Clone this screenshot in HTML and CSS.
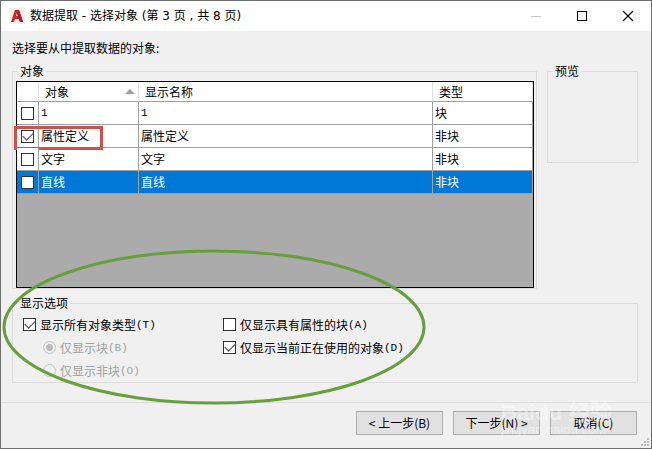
FILE: index.html
```
<!DOCTYPE html>
<html lang="zh-CN">

    <head>
        <meta charset="utf-8">
        <title>数据提取 - 选择对象</title>
        <meta name="viewport" content="width=device-width, initial-scale=1.0">
        <link rel="stylesheet" href="styles.css">
    </head>

    <body>
        <header class="titlebar">
            <svg class="logo" viewBox="0 0 16 16" width="16" height="16">
                <rect width="16" height="16" fill="#f9ecea" />
                <path d="M2 14 L6 2 H10 L14 14 H11 L10 11 H6 L5 14 Z M7 8 H9 L8 5 Z" fill="#c5282f"
                    fill-rule="evenodd" />
                <path d="M9 2 H10 L14 14 H11 L10 11 L9 8 L8 5 Z" fill="#a51f27" />
            </svg>
            <h1>数据提取 - 选择对象 (第 3 页 , 共 8 页)</h1>
            <div class="window-buttons">
                <button type="button" aria-label="最小化" disabled>
                    <svg viewBox="0 0 12 12" width="12" height="12"><path d="M1 6.500 H11" stroke="#c8c8c8" /></svg>
                </button>
                <button type="button" aria-label="最大化">
                    <svg viewBox="0 0 12 12" width="12" height="12"><rect x="1.500" y="1.500" width="9" height="9" fill="none" stroke="#000" /></svg>
                </button>
                <button type="button" aria-label="关闭">
                    <svg viewBox="0 0 12 12" width="12" height="12"><path d="M1 1 L11 11 M11 1 L1 11" stroke="#000" stroke-width="1.200" /></svg>
                </button>
            </div>
        </header>

        <main>
            <p class="intro">选择要从中提取数据的对象:</p>
            <div class="columns">
                <fieldset class="objects">
                    <legend>对象</legend>
                    <div class="grid">
                        <table>
                            <colgroup>
                                <col class="col-check">
                                <col class="col-object">
                                <col class="col-name">
                                <col class="col-type">
                            </colgroup>
                            <thead>
                                <tr>
                                    <th></th>
                                    <th><div class="sorted">对象 <svg viewBox="0 0 10 5" width="10" height="5"><path d="M0 5 L5 0 L10 5 Z" fill="#a0a0a0" /></svg></div></th>
                                    <th>显示名称</th>
                                    <th>类型</th>
                                </tr>
                            </thead>
                            <tbody>
                                <tr>
                                    <td><input type="checkbox" aria-label="1"></td>
                                    <td class="mono">1</td>
                                    <td class="mono">1</td>
                                    <td>块</td>
                                </tr>
                                <tr>
                                    <td><input type="checkbox" aria-label="属性定义" checked><span class="red-mark"></span></td>
                                    <td>属性定义</td>
                                    <td>属性定义</td>
                                    <td>非块</td>
                                </tr>
                                <tr>
                                    <td><input type="checkbox" aria-label="文字"></td>
                                    <td>文字</td>
                                    <td>文字</td>
                                    <td>非块</td>
                                </tr>
                                <tr class="selected">
                                    <td><input type="checkbox" aria-label="直线"></td>
                                    <td>直线</td>
                                    <td>直线</td>
                                    <td>非块</td>
                                </tr>
                            </tbody>
                        </table>
                    </div>
                </fieldset>

                <fieldset class="preview">
                    <legend>预览</legend>
                </fieldset>
            </div>

            <fieldset class="options">
                <legend>显示选项</legend>
                <div class="option-columns">
                    <div>
                        <label><input type="checkbox" checked>显示所有对象类型<span class="mono">(T)</span></label>
                        <label class="sub"><input type="radio" name="kind" checked disabled>仅显示块<span class="mono">(B)</span></label>
                        <label class="sub"><input type="radio" name="kind" disabled>仅显示非块<span class="mono">(O)</span></label>
                    </div>
                    <div>
                        <label><input type="checkbox">仅显示具有属性的块<span class="mono">(A)</span></label>
                        <label><input type="checkbox" checked>仅显示当前正在使用的对象<span class="mono">(D)</span></label>
                    </div>
                </div>
                <svg class="green-mark" viewBox="0 0 424 156" width="424" height="156">
                    <ellipse cx="212" cy="78" rx="210" ry="76" fill="none" stroke="#669f3c" stroke-width="3" />
                </svg>
            </fieldset>
        </main>

        <footer>
            <button type="button">&lt; 上一步(B)</button>
            <button type="button">下一步(N) &gt;</button>
            <button type="button">取消(C)</button>
            <div class="watermark">
                <span class="brand">Baidu 经验</span>
                <span>jingyan.baidu.com</span>
            </div>
            <svg class="grip" viewBox="0 0 8 8" width="8" height="8">
                <path d="M6 0h2v2h-2z M3 3h2v2h-2z M6 3h2v2h-2z M0 6h2v2h-2z M3 6h2v2h-2z M6 6h2v2h-2z" fill="#bdbdbd" />
            </svg>
        </footer>
    </body>

</html>
```

FILE: styles.css
```
* {
    box-sizing: border-box;
}

body {
    margin: 0;
    min-height: 100vh;
    display: flex;
    flex-direction: column;
    border: 1px solid #6e7070;
    background: #f0f0f0;
    color: #000;
    font: 12px/16px "Noto Sans CJK SC", sans-serif;
}

button,
input {
    font: inherit;
    margin: 0;
}

/* title bar */

.titlebar {
    display: flex;
    align-items: center;
    height: 30px;
    padding-left: 8px;
    background: #fff;
}

.titlebar h1 {
    flex: 1;
    margin: 0 0 0 5px;
    font-family: "DejaVu Sans", "Noto Sans CJK SC", sans-serif;
    font-size: 12px;
    font-weight: normal;
}

.window-buttons {
    display: flex;
}

.window-buttons button {
    display: flex;
    align-items: center;
    justify-content: center;
    width: 46px;
    height: 28px;
    padding: 0;
    border: 0;
    background: none;
}

/* content */

main {
    flex: 1;
    padding: 9px 13px 0 11px;
}

.intro {
    margin: 0 0 7px;
}

.columns {
    display: flex;
    align-items: flex-start;
    gap: 10px;
}

fieldset {
    min-width: 0;
    margin: 0;
    padding: 0;
    border: 1px solid #dcdcdc;
}

legend {
    margin-left: 5px;
    padding: 0 2px;
}

.objects {
    flex: 1;
}

.preview {
    width: 91px;
    height: 100px;
}

.grid {
    height: 207px;
    margin: 2px 2px 0 3px;
    border: 1px solid #000;
    background: #ababab;
}

table {
    width: 100%;
    table-layout: fixed;
    border-collapse: separate;
    border-spacing: 0;
}

.col-check {
    width: 22px;
}

.col-object {
    width: 100px;
}

.col-type {
    width: 100px;
}

th,
td {
    height: 23px;
    padding: 0 0 0 2px;
    border-right: 1px solid #a0a0a0;
    border-bottom: 1px solid #a0a0a0;
    background: #fff;
    text-align: left;
    font-weight: normal;
    line-height: 16px;
}

th {
    height: 20px;
    padding-left: 6px;
    border-right-color: #e0e0e0;
}

td:first-child {
    position: relative;
    padding-left: 4px;
}

.sorted {
    display: flex;
    align-items: center;
    justify-content: space-between;
    padding-right: 3px;
}

.selected td {
    background: #0078d7;
    color: #fff;
}

.mono {
    font-family: "Liberation Mono", monospace;
    font-size: 11px;
}

input[type="checkbox"] {
    appearance: none;
    display: block;
    flex: none;
    width: 13px;
    height: 13px;
    border: 1px solid #333;
    background: #fff;
}

input[type="checkbox"]:checked::before {
    content: "";
    display: block;
    width: 9px;
    height: 5px;
    margin: 1px 1px;
    border: solid #444;
    border-width: 0 0 1px 1px;
    transform: rotate(-45deg);
}

input[type="radio"] {
    appearance: none;
    flex: none;
    width: 13px;
    height: 13px;
    border: 1px solid #c4c4c4;
    border-radius: 50%;
}

input[type="radio"]:checked {
    background: radial-gradient(circle, #bcbcbc 3px, transparent 4px);
}

.red-mark {
    position: absolute;
    left: -3px;
    top: 1px;
    width: 89px;
    height: 24px;
    border: 3px solid #d0504c;
}

/* display options */

.options {
    position: relative;
    z-index: 1;
    margin-top: 6px;
}

.option-columns {
    display: grid;
    grid-template-columns: 200px 1fr;
    padding: 2px 0 0 10px;
}

label {
    display: flex;
    align-items: center;
    gap: 4px;
    height: 23px;
}

label .mono {
    margin-left: -4px;
}

.sub {
    padding-left: 20px;
    color: #a0a0a0;
}

.green-mark {
    position: absolute;
    left: -11px;
    top: -62px;
    pointer-events: none;
}

/* wizard buttons */

footer {
    position: relative;
    display: flex;
    justify-content: flex-end;
    gap: 10px;
    padding: 8px 14px 13px;
    border-top: 1px solid #dcdcdc;
}

footer button {
    width: 87px;
    height: 24px;
    padding: 0;
    border: 1px solid #adadad;
    background: #e1e1e1;
}

.watermark {
    position: absolute;
    right: 30px;
    top: 0;
    width: 120px;
    color: rgba(255, 255, 255, 0.4);
    font: 13px/14px "Liberation Sans", "Noto Sans CJK SC", sans-serif;
    pointer-events: none;
}

.watermark span {
    display: block;
}

.watermark .brand {
    font-size: 22px;
    font-weight: bold;
    line-height: 20px;
}

.grip {
    position: absolute;
    right: 2px;
    bottom: 2px;
}
```
